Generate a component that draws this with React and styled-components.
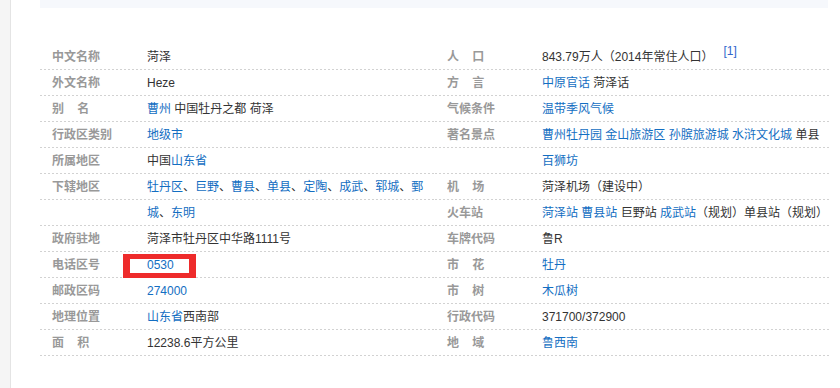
import React from "react";
import styled, { createGlobalStyle } from "styled-components";

const GlobalStyle = createGlobalStyle`
  html, body {
    margin: 0;
    padding: 0;
    background: #fff;
  }
  body {
    font-family: "Liberation Sans", Arial, "Noto Sans CJK SC", sans-serif;
    font-size: 12px;
    color: #333;
  }
`;

const Page = styled.div`
  display: flex;
  min-height: 100vh;
`;

const Rail = styled.div`
  flex: none;
  width: 10px;
  background: #f5f5f5;
  border-right: 1px solid #e4e4e4;
`;

const Main = styled.div`
  flex: 1;
  padding-left: 29px;
`;

const TopBand = styled.div`
  width: 788px;
  height: 8px;
  background: #f6f8fc;
`;

const InfoBox = styled.div`
  display: flex;
  margin-top: 36px;
`;

const Column = styled.dl`
  margin: 0;
  width: 395px;
`;

const Item = styled.div`
  display: flex;
  line-height: 26px;
  background-image: linear-gradient(to bottom, #fff 25px, transparent 25px),
    linear-gradient(to right, #d2d2d2 50%, transparent 50%);
  background-size: 100% 26px, 4px 26px;
  background-repeat: repeat-y, repeat;
`;

const Label = styled.dt`
  flex: none;
  width: 95px;
  padding-left: 12px;
  font-weight: 700;
  color: #999;
  white-space: pre;
`;

const Value = styled.dd`
  flex: none;
  position: relative;
  width: 287px;
  margin: 0;
  color: #333;

  ${(p) =>
    p.$marked &&
    `
    &::after {
      content: "";
      position: absolute;
      left: -24px;
      top: 2px;
      width: 59px;
      height: 14px;
      border: 5px solid #ee2b2b;
      border-left-width: 7px;
      border-right-width: 7px;
    }
  `}
`;

const Link = styled.a`
  color: #136ec2;
  text-decoration: none;
  cursor: pointer;
`;

const Ref = styled.sup`
  margin-left: 10px;
  font-size: 12px;
  line-height: 0;
  color: #3366cc;
  vertical-align: 6px;
`;

const L = (text) => ({ link: text });
const gap = "\u00a0\u00a0\u00a0\u00a0";

const left = [
  { label: "中文名称", value: ["菏泽"] },
  { label: "外文名称", value: ["Heze"] },
  { label: `别${gap}名`, value: [L("曹州"), " 中国牡丹之都 荷泽"] },
  { label: "行政区类别", value: [L("地级市")] },
  { label: "所属地区", value: ["中国", L("山东省")] },
  {
    label: "下辖地区",
    value: [
      L("牡丹区"), "、", L("巨野"), "、", L("曹县"), "、", L("单县"), "、",
      L("定陶"), "、", L("成武"), "、", L("郓城"), "、", L("鄄城"), "、", L("东明"),
    ],
  },
  { label: "政府驻地", value: ["菏泽市牡丹区中华路1111号"] },
  { label: "电话区号", value: [L("0530")], marked: true },
  { label: "邮政区码", value: [L("274000")] },
  { label: "地理位置", value: [L("山东省"), "西南部"] },
  { label: `面${gap}积`, value: ["12238.6平方公里"] },
];

const right = [
  { label: `人${gap}口`, value: ["843.79万人（2014年常住人口）"], note: "[1]" },
  { label: `方${gap}言`, value: [L("中原官话"), " 菏泽话"] },
  { label: "气候条件", value: [L("温带季风气候")] },
  {
    label: "著名景点",
    value: [
      L("曹州牡丹园"), " ", L("金山旅游区"), " ", L("孙膑旅游城"), " ",
      L("水浒文化城"), " 单县", L("百狮坊"),
    ],
  },
  { label: `机${gap}场`, value: ["菏泽机场（建设中）"] },
  {
    label: "火车站",
    value: [L("菏泽站"), " ", L("曹县站"), " 巨野站 ", L("成武站"), "（规划）单县站（规划）"],
  },
  { label: "车牌代码", value: ["鲁R"] },
  { label: `市${gap}花`, value: [L("牡丹")] },
  { label: `市${gap}树`, value: [L("木瓜树")] },
  { label: "行政代码", value: ["371700/372900"] },
  { label: `地${gap}域`, value: [L("鲁西南")] },
];

const InfoColumn = ({ items }) => (
  <Column>
    {items.map((item) => (
      <Item key={item.label}>
        <Label>{item.label}</Label>
        <Value $marked={item.marked}>
          {item.value.map((part, i) =>
            typeof part === "string" ? (
              <React.Fragment key={i}>{part}</React.Fragment>
            ) : (
              <Link key={i}>{part.link}</Link>
            )
          )}
          {item.note && <Ref>{item.note}</Ref>}
        </Value>
      </Item>
    ))}
  </Column>
);

export default function App() {
  return (
    <Page>
      <GlobalStyle />
      <Rail />
      <Main>
        <TopBand />
        <InfoBox>
          <InfoColumn items={left} />
          <InfoColumn items={right} />
        </InfoBox>
      </Main>
    </Page>
  );
}
